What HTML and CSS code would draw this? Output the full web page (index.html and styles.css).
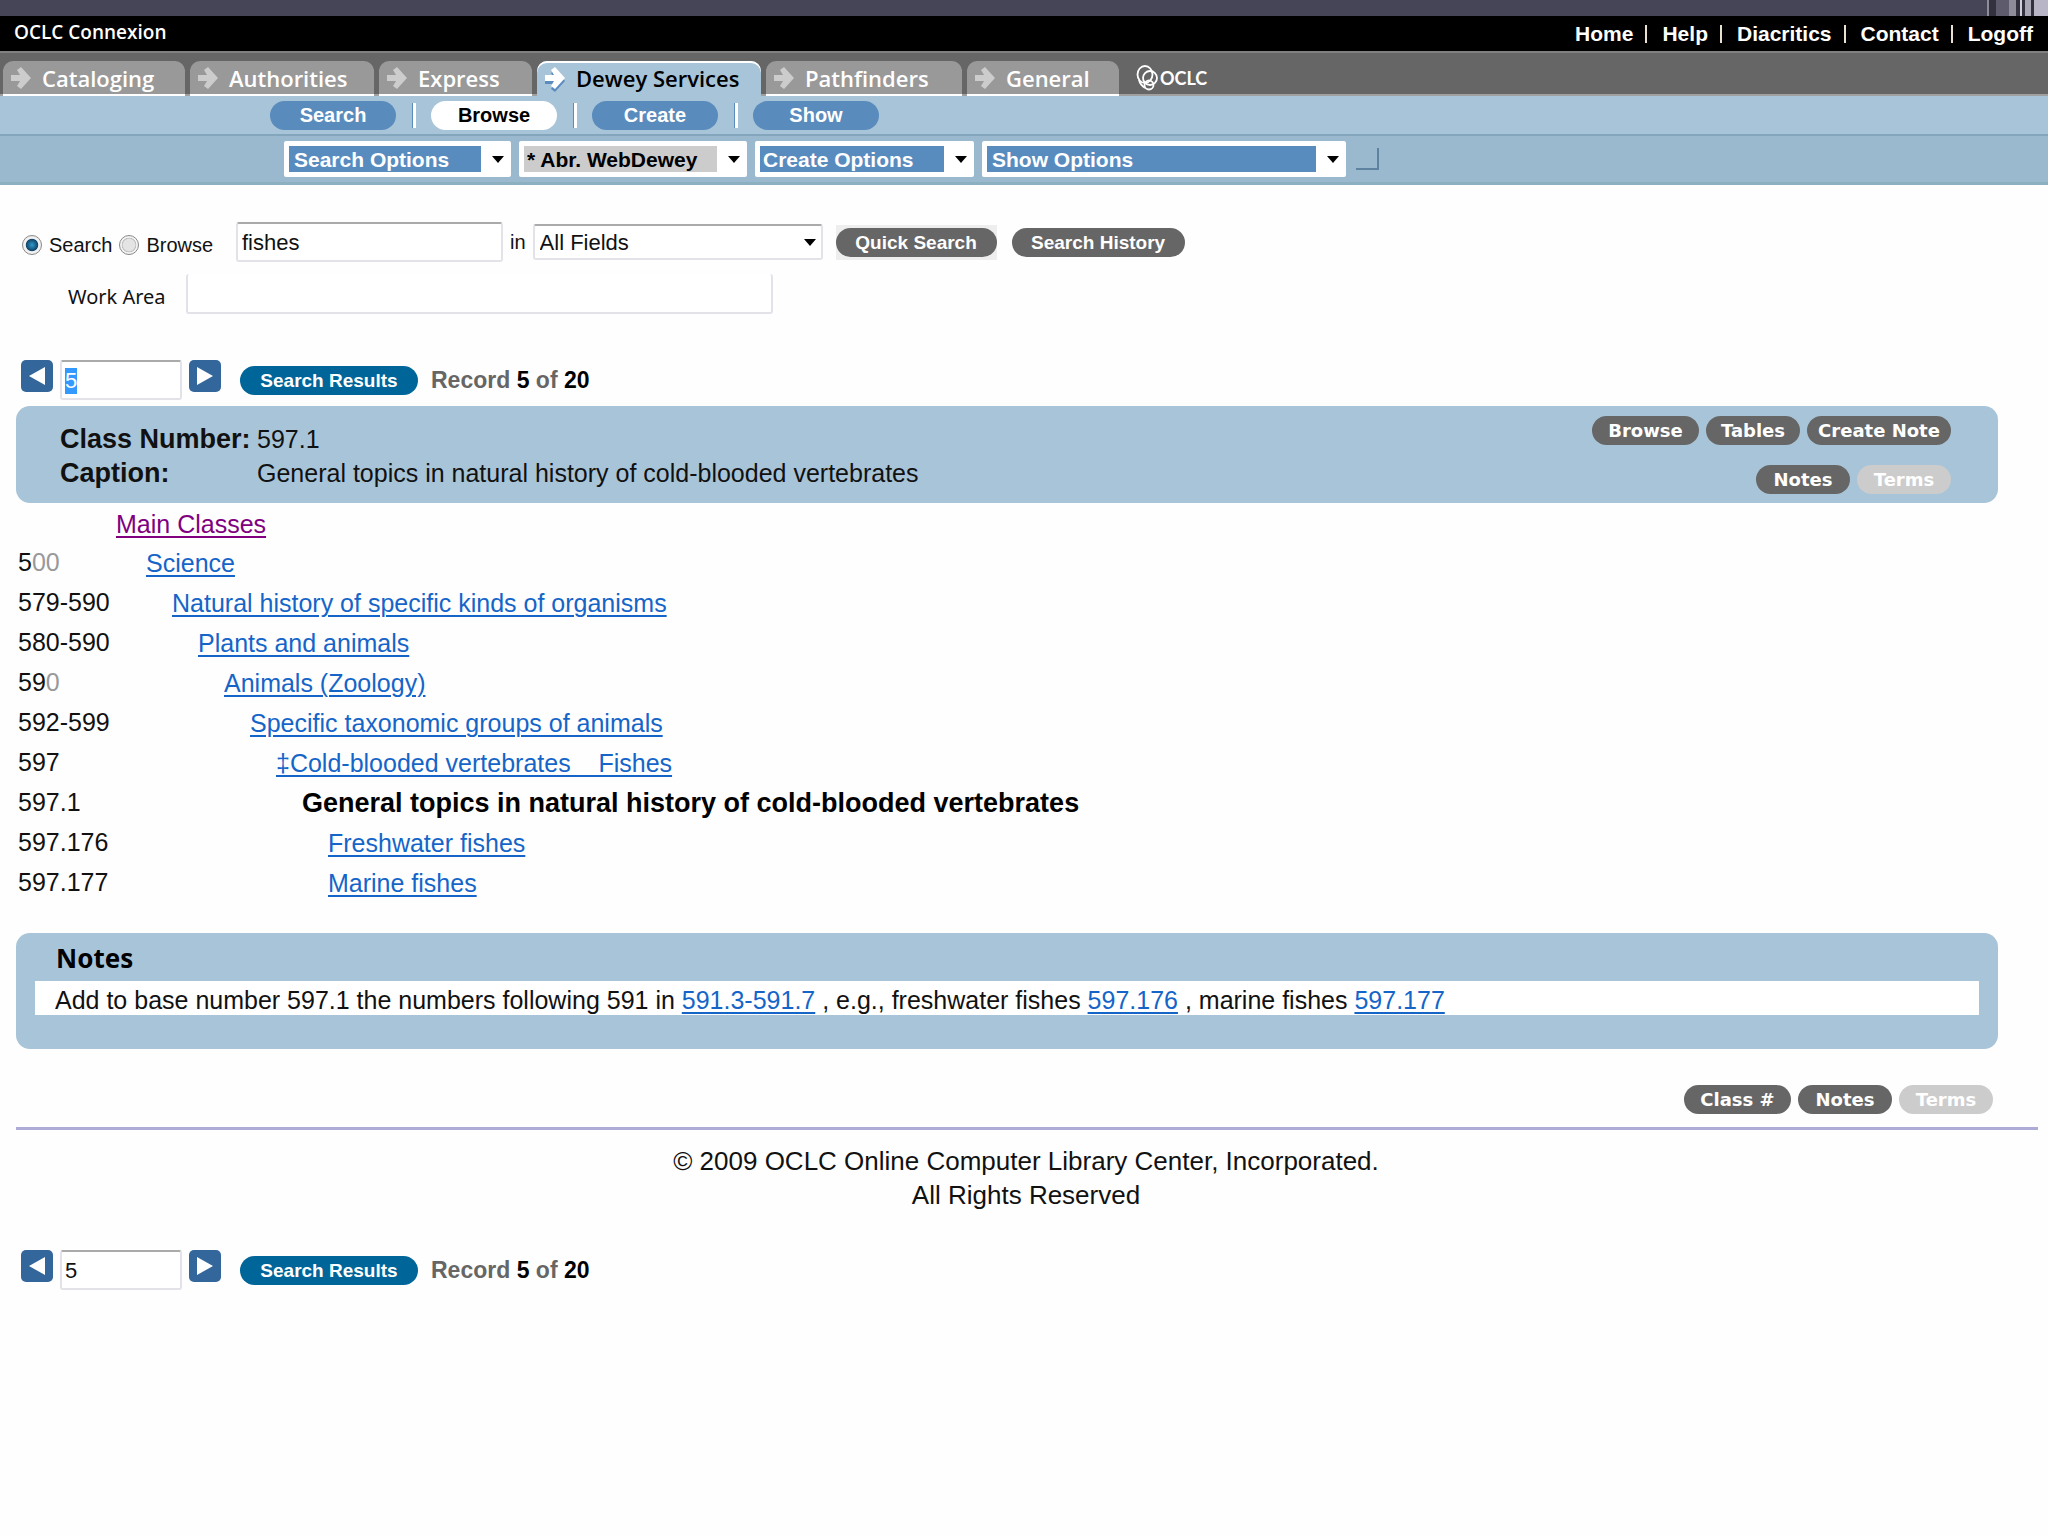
FILE: index.html
```html
<!doctype html>
<html lang="en">
<head>
	<meta charset="utf-8">
	<title>OCLC Connexion</title>
	<link rel="stylesheet" href="styles.css">
</head>

<body>
	<svg width="0" height="0" class="defs">
		<symbol id="arrow" viewBox="0 0 24 24">
			<path d="M2 9h9L8 4l4-3 10 11-10 11-4-3 3-5H2z"/>
		</symbol>
	</svg>

	<div class="strip"></div>
	<header class="topbar">
		<span class="brand">OCLC Connexion</span>
		<nav class="links">
			<a href="#">Home</a><i></i>
			<a href="#">Help</a><i></i>
			<a href="#">Diacritics</a><i></i>
			<a href="#">Contact</a><i></i>
			<a href="#">Logoff</a>
		</nav>
	</header>

	<nav class="tabs">
		<a href="#" class="tab t1"><svg><use href="#arrow"/></svg>Cataloging</a>
		<a href="#" class="tab t2"><svg><use href="#arrow"/></svg>Authorities</a>
		<a href="#" class="tab t3"><svg><use href="#arrow"/></svg>Express</a>
		<a href="#" class="tab t4 active"><svg><use href="#arrow"/></svg>Dewey Services</a>
		<a href="#" class="tab t5"><svg><use href="#arrow"/></svg>Pathfinders</a>
		<a href="#" class="tab t6"><svg><use href="#arrow"/></svg>General</a>
		<span class="logo">
			<svg viewBox="0 0 22 26" width="22" height="26">
				<ellipse cx="9" cy="9.5" rx="7.5" ry="8.5"/>
				<path d="M3 15c1 4 3 6 6 8"/>
				<circle cx="14" cy="13" r="7"/>
				<circle cx="13" cy="20" r="4.5"/>
			</svg>OCLC
		</span>
	</nav>

	<nav class="subnav">
		<a href="#">Search</a>
		<a href="#" class="on">Browse</a>
		<a href="#">Create</a>
		<a href="#">Show</a>
	</nav>

	<div class="options">
		<span class="drop o1"><select aria-label="Search Options"><option>Search Options</option></select></span>
		<span class="drop o2"><select aria-label="Browse Options"><option>* Abr. WebDewey</option></select></span>
		<span class="drop o3"><select aria-label="Create Options"><option>Create Options</option></select></span>
		<span class="drop o4"><select aria-label="Show Options"><option>Show Options</option></select></span>
		<span class="corner"></span>
	</div>

	<form class="search">
		<div class="modes">
			<input type="radio" name="mode" id="mode-search" checked><label for="mode-search">Search</label>
			<input type="radio" name="mode" id="mode-browse"><label for="mode-browse">Browse</label>
		</div>
		<input type="text" class="box term" value="fishes" aria-label="Search term">
		<label for="field" class="in">in</label>
		<span class="drop field"><select id="field"><option>All Fields</option></select></span>
		<span class="quick"><button type="button" class="pill">Quick Search</button></span>
		<button type="button" class="pill history">Search History</button>
	</form>
	<div class="work">
		<label for="work">Work Area</label>
		<input type="text" id="work" class="box">
	</div>

	<div class="record">
		<button type="button" class="step" aria-label="Previous record"><svg viewBox="0 0 32 32"><path d="M24 7v18L8 16z"/></svg></button>
		<input type="text" class="box num" id="rec" value="5" aria-label="Record number">
		<button type="button" class="step" aria-label="Next record"><svg viewBox="0 0 32 32"><path d="M8 7v18l16-9z"/></svg></button>
		<button type="button" class="pill results">Search Results</button>
		<span class="count">Record <b>5</b> of <b>20</b></span>
	</div>

	<section class="panel heading">
		<dl>
			<dt>Class Number:</dt><dd>597.1</dd>
			<dt>Caption:</dt><dd>General topics in natural history of cold-blooded vertebrates</dd>
		</dl>
		<div class="actions">
			<div class="btns">
				<button type="button" class="pill wide">Browse</button>
				<button type="button" class="pill">Tables</button>
				<button type="button" class="pill create">Create Note</button>
			</div>
			<div class="btns">
				<button type="button" class="pill">Notes</button>
				<button type="button" class="pill" disabled>Terms</button>
			</div>
		</div>
	</section>

	<table class="tree">
		<tr class="root"><td></td><td class="l0"><a href="#" class="visited">Main Classes</a></td></tr>
		<tr><td>5<s>00</s></td><td class="l1"><a href="#">Science</a></td></tr>
		<tr><td>579-590</td><td class="l2"><a href="#">Natural history of specific kinds of organisms</a></td></tr>
		<tr><td>580-590</td><td class="l3"><a href="#">Plants and animals</a></td></tr>
		<tr><td>59<s>0</s></td><td class="l4"><a href="#">Animals (Zoology)</a></td></tr>
		<tr><td>592-599</td><td class="l5"><a href="#">Specific taxonomic groups of animals</a></td></tr>
		<tr><td>597</td><td class="l6"><a href="#">‡Cold-blooded vertebrates &nbsp;&nbsp; Fishes</a></td></tr>
		<tr><td>597.1</td><td class="l7"><b>General topics in natural history of cold-blooded vertebrates</b></td></tr>
		<tr><td>597.176</td><td class="l8"><a href="#">Freshwater fishes</a></td></tr>
		<tr><td>597.177</td><td class="l8"><a href="#">Marine fishes</a></td></tr>
	</table>

	<section class="panel notes">
		<h2>Notes</h2>
		<p>Add to base number 597.1 the numbers following 591 in <a href="#">591.3-591.7</a> , e.g., freshwater fishes <a href="#">597.176</a> , marine fishes <a href="#">597.177</a></p>
	</section>

	<div class="btns bottom">
		<button type="button" class="pill wide">Class #</button>
		<button type="button" class="pill">Notes</button>
		<button type="button" class="pill" disabled>Terms</button>
	</div>

	<footer>
		© 2009 OCLC Online Computer Library Center, Incorporated.<br>
		All Rights Reserved
	</footer>

	<div class="record last">
		<button type="button" class="step" aria-label="Previous record"><svg viewBox="0 0 32 32"><path d="M24 7v18L8 16z"/></svg></button>
		<input type="text" class="box num" value="5" aria-label="Record number">
		<button type="button" class="step" aria-label="Next record"><svg viewBox="0 0 32 32"><path d="M8 7v18l16-9z"/></svg></button>
		<button type="button" class="pill results">Search Results</button>
		<span class="count">Record <b>5</b> of <b>20</b></span>
	</div>

	<script>
		// start with the record number selected
		document.getElementById('rec').focus();
		document.getElementById('rec').select();
	</script>
</body>
</html>
```
FILE: styles.css
```css
*{
	box-sizing: border-box;
}
body{
	margin: 0;
	background: #fefefe;
	color: #111;
	font-family: "Liberation Sans", Arial, sans-serif;
	font-size: 25px;
	line-height: 34px;
}
a{
	color: #1565c8;
	text-underline-offset: 3px;
	text-decoration-thickness: 2px;
}
button,input,select{
	font-family: inherit;
	margin: 0;
}
.defs{
	position: absolute;
}

/* top */
.strip{
	height: 16px;
	background: linear-gradient(90deg, #8e8c98 2px, #33313f 2px 9px, #5e5c6c 9px 22px, #8e8c98 22px 29px, #33313f 29px 33px, #d0ced8 33px 35px, #33313f 35px 38px, #a8a6b4 38px 44px, #33313f 44px 47px, #b8b6c6 47px) right / 61px 100% no-repeat #464457;
}
.topbar{
	display: flex;
	justify-content: space-between;
	align-items: center;
	height: 35px;
	padding: 0 15px 0 14px;
	background: #000;
	color: #fff;
}
.brand{
	padding-bottom: 3px;
	font-family: "Open Sans", sans-serif;
	font-size: 19px;
	font-weight: 600;
}
.links{
	display: flex;
	align-items: center;
	font-size: 21px;
	font-weight: bold;
}
.links a{
	color: #fff;
	text-decoration: none;
}
.links i{
	width: 2px;
	height: 18px;
	margin: 0 15px 0 12px;
	background: #e8e0d0;
}
.tabs{
	display: flex;
	align-items: flex-end;
	gap: 5px;
	height: 45px;
	padding-left: 3px;
	border-top: 2px solid #808080;
	border-bottom: 2px solid #a0a0a0;
	background: #666;
}
.tab{
	display: flex;
	align-items: center;
	height: 33px;
	padding-left: 6px;
	border-radius: 10px 10px 0 0;
	background: #999;
	box-shadow: 0 2px #fff;
	color: #fff;
	font-family: "Open Sans", sans-serif;
	font-size: 22px;
	font-weight: 600;
	text-decoration: none;
}
.tab svg{
	width: 24px;
	height: 24px;
	margin-right: 9px;
	fill: #ccc;
}
.t1{width: 182px;}
.t2{width: 184px;}
.t3{width: 153px;}
.t4{width: 224px;}
.t5{width: 196px;}
.t6{width: 152px;}
.tab.active{
	background: #a8c4d8;
	box-shadow: 0 2px #a8c4d8, inset 0 2px #fff;
	color: #000;
}
.active svg{
	fill: #fff;
	filter: drop-shadow(0 3px #5a8cc0);
}
.logo{
	display: flex;
	align-items: center;
	height: 33px;
	margin-left: 12px;
	color: #fff;
	font-family: Lato, sans-serif;
	font-size: 18px;
	font-weight: bold;
}
.logo svg{
	margin-right: 2px;
	fill: none;
	stroke: #fff;
	stroke-width: 1.8;
}
.subnav{
	display: flex;
	align-items: center;
	height: 40px;
	padding-left: 270px;
	border-bottom: 2px solid #84a6bd;
	background: #a8c4d8;
}
.subnav a{
	width: 126px;
	border-radius: 15px;
	background: #5a8bbd;
	color: #fff;
	font-size: 20px;
	font-weight: bold;
	line-height: 29px;
	text-align: center;
	text-decoration: none;
}
.subnav a + a{
	margin-left: 35px;
	position: relative;
}
/* divider between the pills */
.subnav a + a::before{
	content: "";
	position: absolute;
	left: -19px;
	top: 2px;
	width: 3px;
	height: 25px;
	border-left: 1px solid #5a8bbd;
	background: #fff;
}
.subnav a.on{
	background: #fff;
	color: #000;
}
.options{
	display: flex;
	align-items: center;
	gap: 8px;
	height: 49px;
	padding-left: 284px;
	border-bottom: 3px solid #8cb0c0;
	background: #9ab8ce;
}
.drop{
	position: relative;
	display: block;
}
.drop::after{
	content: "";
	position: absolute;
	right: 7px;
	top: 50%;
	margin-top: -3px;
	border: 6px solid transparent;
	border-top: 7px solid #000;
	border-bottom: 0;
	pointer-events: none;
}
.drop select{
	display: block;
	width: 100%;
	height: 36px;
	padding: 0 0 0 5px;
	border: 5px solid #fff;
	border-right-width: 30px;
	border-radius: 2px;
	appearance: none;
	background: #588cbf;
	color: #fff;
	font-size: 21px;
	font-weight: bold;
}
.o1{width: 227px;}
.o2{width: 228px;}
.o3{width: 219px;}
.o4{width: 364px;}
.drop.o2 select{
	padding-left: 3px;
	background: #ccc;
	color: #000;
}
.drop.o3 select{
	padding-left: 3px;
}
.corner{
	width: 23px;
	height: 22px;
	margin-left: 2px;
	border-right: 2px solid #5d83a0;
	border-bottom: 2px solid #5d83a0;
}

/* search form */
.search{
	display: flex;
	align-items: center;
	height: 40px;
	margin-top: 37px;
	padding-left: 22px;
	font-size: 20px;
}
.modes{
	display: flex;
	align-items: center;
	width: 214px;
	padding-top: 6px;
}
.modes input{
	appearance: none;
	width: 20px;
	height: 20px;
	border: 1px solid #888;
	border-radius: 50%;
	background: radial-gradient(#e4e4e4 45%, #bbb 55%, #f4f4f4 60%);
}
.modes input:checked{
	background: radial-gradient(#2f9ccc, #12456b 45%, #f0f0f0 52%);
}
.modes label{
	margin: 0 7px;
}
.box{
	height: 40px;
	padding: 2px 4px 0;
	border: 2px solid #e2e2e8;
	border-top-color: #aaa;
	border-radius: 3px;
	outline: none;
	background: #fff;
	color: #111;
	font-size: 22px;
}
.term{
	width: 267px;
}
.in{
	margin: 0 7px;
}
.drop.field{
	width: 290px;
}
.field select{
	border: 2px solid #e2e2e8;
	border-top-color: #aaa;
	border-radius: 3px;
	background: #fff;
	color: #111;
	font-size: 22px;
	font-weight: normal;
}
.quick{
	display: flex;
	align-items: center;
	height: 35px;
	margin: 0 15px 0 13px;
	background: #eee;
}
.pill{
	height: 29px;
	padding: 0;
	border: 0;
	border-radius: 15px;
	background: #666;
	color: #fff;
	font-size: 19px;
	font-weight: bold;
	line-height: 29px;
}
.quick .pill{
	width: 161px;
}
.history{
	width: 173px;
}
.work{
	display: flex;
	align-items: center;
	gap: 20px;
	margin-top: 12px;
	padding-left: 68px;
	font-family: "Noto Sans", sans-serif;
	font-size: 20px;
}
.work label{
	padding-top: 6px;
}
.work .box{
	width: 587px;
	border-top: 0;
}

/* record navigation */
.record{
	display: flex;
	align-items: flex-start;
	margin-top: 46px;
	padding-left: 21px;
}
.step{
	width: 32px;
	height: 32px;
	padding: 0;
	border: 0;
	border-radius: 5px;
	background: #33669a;
}
.step svg{
	display: block;
	fill: #fff;
}
.num{
	width: 122px;
	margin: 0 7px;
	padding: 2px 3px 0;
}
.num::selection{
	background: #3399ff;
	color: #fff;
}
.results{
	width: 178px;
	margin: 6px 13px 0 19px;
	background: #069;
}
.count{
	margin-top: 6px;
	color: #666;
	font-size: 23px;
	font-weight: bold;
	line-height: 29px;
}
.count b{
	color: #000;
}

/* class heading */
.panel{
	margin: 0 50px 0 16px;
	border-radius: 14px;
	background: #a8c4d8;
}
.heading{
	display: flex;
	justify-content: space-between;
	height: 97px;
	margin-top: 6px;
	padding: 16px 47px 0 44px;
}
dl{
	display: grid;
	grid-template-columns: 197px auto;
	align-content: start;
	margin: 0;
}
dt{
	font-size: 27px;
	font-weight: bold;
	white-space: nowrap;
}
dd{
	margin: 0;
}
.actions{
	display: flex;
	flex-direction: column;
	gap: 20px;
	margin-top: -6px;
}
.btns{
	display: flex;
	justify-content: flex-end;
	gap: 7px;
}
.btns .pill{
	width: 94px;
	font-family: "DejaVu Sans", Verdana, sans-serif;
	font-size: 18px;
}
.btns .wide{
	width: 107px;
}
.btns .create{
	width: 144px;
}
.pill:disabled{
	background: #ccc;
}

.tree{
	margin: 1px 0 0 18px;
	border-spacing: 0;
}
.tree td{
	height: 40px;
	padding: 0;
}
.tree .root td{
	height: 39px;
}
.tree td:first-child{
	width: 98px;
	padding-bottom: 2px;
}
.tree b{
	font-size: 27px;
	color: #000;
}
.tree s{
	color: #999;
	text-decoration: none;
}
.tree .visited{
	color: #800080;
}
.tree .l1{padding-left: 30px;}
.tree .l2{padding-left: 56px;}
.tree .l3{padding-left: 82px;}
.tree .l4{padding-left: 108px;}
.tree .l5{padding-left: 134px;}
.tree .l6{padding-left: 160px;}
.tree .l7{padding-left: 186px;}
.tree .l8{padding-left: 212px;}

.notes{
	margin-top: 30px;
	padding: 8px 19px 34px;
}
.notes h2{
	margin: 0;
	padding-left: 21px;
	color: #000;
	font-family: "Noto Sans", sans-serif;
	font-size: 26px;
	line-height: 34px;
}
.notes p{
	margin: 6px 0 0;
	padding: 4px 0 0 20px;
	background: #fff;
	line-height: 30px;
}
.bottom{
	margin: 36px 10px 0 16px;
	padding: 0 45px 13px 0;
	border-bottom: 3px solid #aeacd6;
}
footer{
	margin-top: 14px;
	padding-left: 4px;
	font-size: 26px;
	text-align: center;
}
.last{
	margin-top: 38px;
}
```
